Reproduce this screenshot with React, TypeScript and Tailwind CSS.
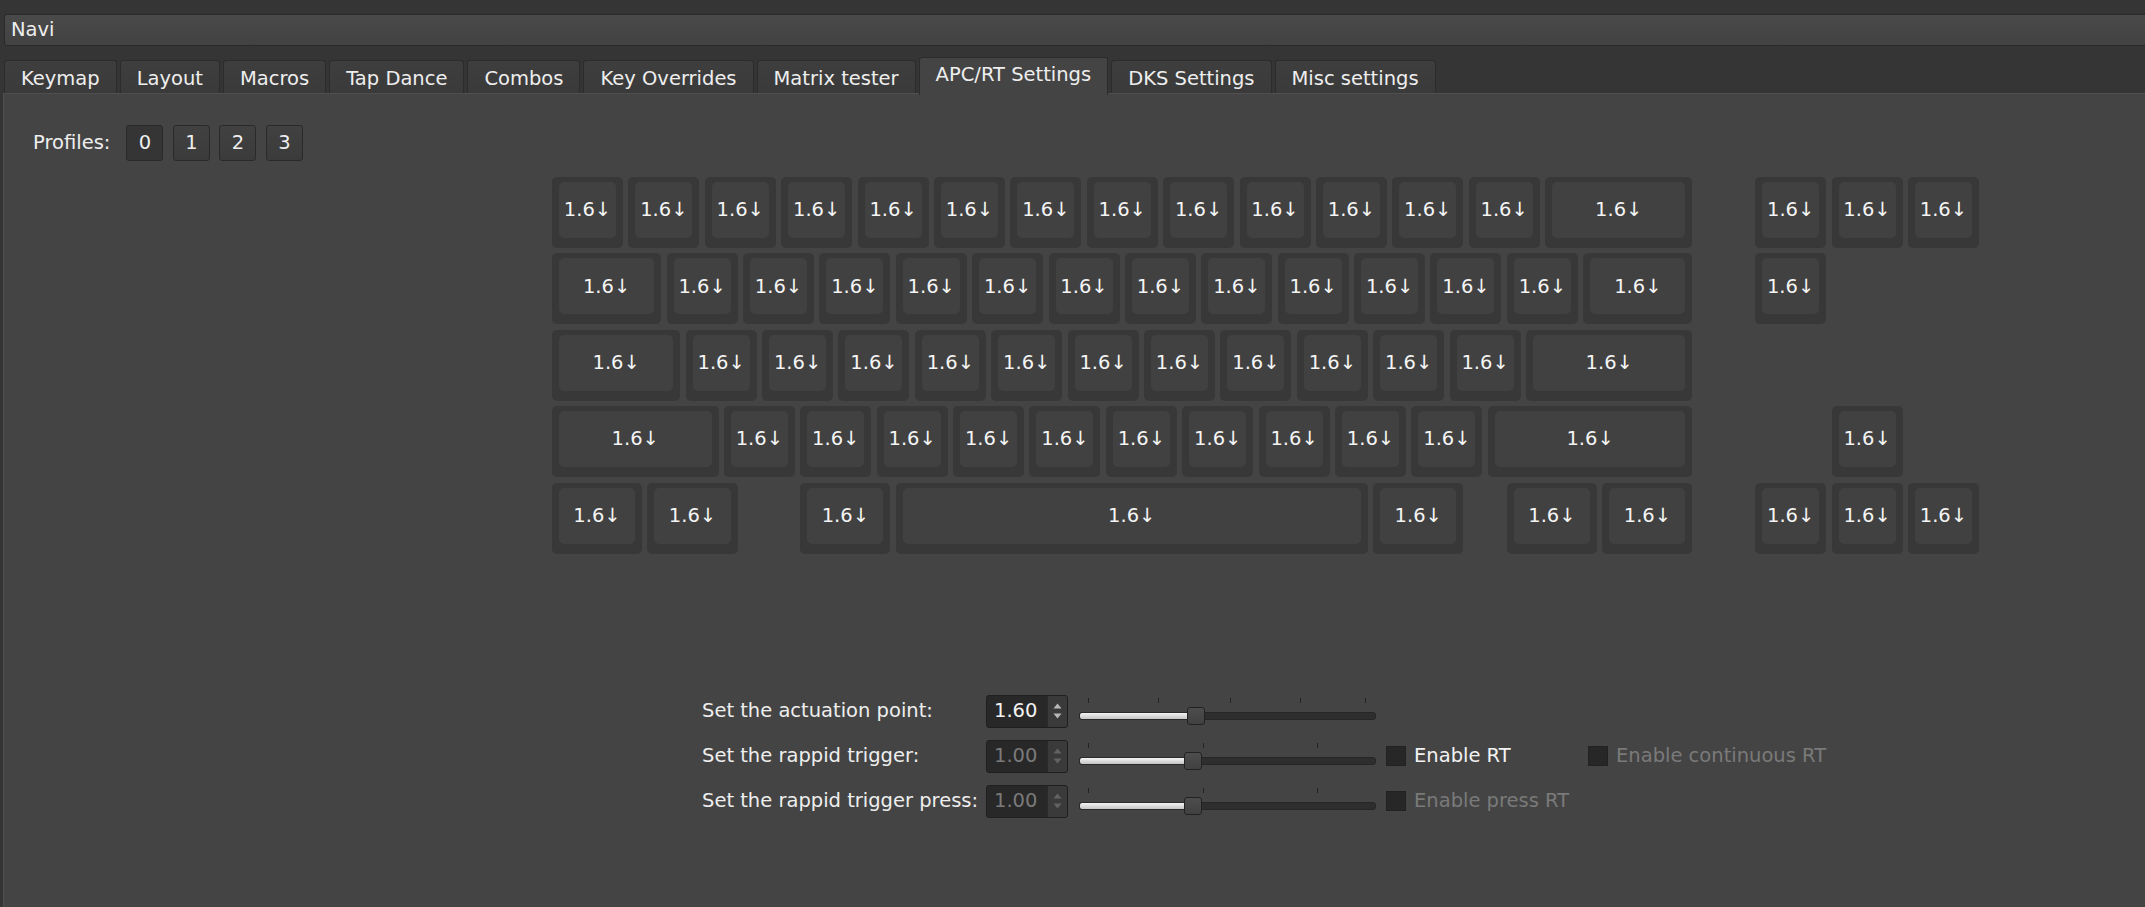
import React from "react";

const U = 76.4;
const G = 5.4;

// negative number = empty space in units, positive = key width in units
const ones = (n: number) => Array(n).fill(1) as number[];

const ROWS: number[][] = [
    [...ones(13), 2, -0.75, 1, 1, 1],
    [1.5, ...ones(12), 1.5, -0.75, 1],
    [1.75, ...ones(11), 2.25],
    [2.25, ...ones(10), 2.75, -1.75, 1],
    [1.25, 1.25, -0.75, 1.25, 6.25, 1.25, -0.5, 1.25, 1.25, -0.75, 1, 1, 1],
];

const TABS = [
    "Keymap",
    "Layout",
    "Macros",
    "Tap Dance",
    "Combos",
    "Key Overrides",
    "Matrix tester",
    "APC/RT Settings",
    "DKS Settings",
    "Misc settings",
];

const Key = ({ w }: { w: number }) => (
    <div
        className="shrink-0 h-[71px] rounded-[5px] bg-[#383838] pt-[5px] px-[7px] pb-[10px]"
        style={{ width: w * U - G, marginRight: G }}
    >
        <div className="h-full rounded-[5px] bg-[#414141] flex items-center justify-center text-[19.5px] text-[#f4f4f4]">
            1.6↓
        </div>
    </div>
);

const SpinBox = ({ value, disabled }: { value: string; disabled?: boolean }) => (
    <div className="w-[82px] h-[33px] shrink-0 rounded-[3px] border border-[#1f1f1f] bg-[#282828] flex">
        <div className={`flex-1 flex items-center pl-[7px] ${disabled ? "text-[#7a7a7a]" : "text-[#f2f2f2]"}`}>
            {value}
        </div>
        <div className="w-[20px] bg-[#3a3a3a] border-l border-[#2a2a2a] rounded-r-[2px] flex flex-col items-center justify-center gap-[4px]">
            <svg width="9" height="6" viewBox="0 0 9 6">
                <path d="M0.5 5.5 L4.5 0.5 L8.5 5.5 Z" fill={disabled ? "#626262" : "#b8b8b8"} />
            </svg>
            <svg width="9" height="6" viewBox="0 0 9 6">
                <path d="M0.5 0.5 L4.5 5.5 L8.5 0.5 Z" fill={disabled ? "#626262" : "#b8b8b8"} />
            </svg>
        </div>
    </div>
);

const Slider = ({ ticks, handle }: { ticks: number[]; handle: number }) => (
    <div className="relative w-[297px] h-[33px] shrink-0 ml-[11px]">
        {ticks.map((t) => (
            <div key={t} className="absolute top-[3px] w-[1px] h-[5px] bg-[#232323]" style={{ left: t }} />
        ))}
        <div className="absolute left-0 right-0 top-[17px] h-[8px] rounded-[3px] border border-[#262626] bg-[#2e2e2e]" />
        <div
            className="absolute left-0 top-[17px] h-[8px] rounded-l-[3px] border border-[#2a2a2a] bg-gradient-to-b from-[#f4f4f4] to-[#c4c4c4]"
            style={{ width: handle }}
        />
        <div
            className="absolute top-[12px] w-[18px] h-[18px] rounded-[3px] border border-[#222] bg-gradient-to-b from-[#4d4d4d] to-[#414141]"
            style={{ left: handle - 9 }}
        />
    </div>
);

const Check = ({ label, disabled, width }: { label: string; disabled?: boolean; width?: number }) => (
    <div className="flex items-center shrink-0" style={width ? { width } : undefined}>
        <div className="w-[20px] h-[20px] bg-[#272727] border border-[#222]" />
        <span className={`ml-[8px] ${disabled ? "text-[#7a7a7a]" : "text-[#f2f2f2]"}`}>{label}</span>
    </div>
);

export default function App() {
    return (
        <div className="w-[2145px] h-[907px] overflow-hidden bg-[#353535] text-[#eeeeee] text-[19.5px] leading-none font-['DejaVu_Sans',sans-serif]">
            <div className="pt-[14px] pl-[4px]">
                <div className="h-[32px] w-[2170px] rounded-[3px] border border-[#2a2a2a] bg-gradient-to-b from-[#4a4a4a] to-[#424242] flex items-center pl-[6px]">
                    Navi
                </div>
            </div>

            <div className="mt-[11px] h-[36px] flex items-end gap-[3px] pl-[4px]">
                {TABS.map((t) => {
                    const active = t === "APC/RT Settings";
                    return (
                        <div
                            key={t}
                            className={
                                active
                                    ? "relative z-10 h-[38px] -mb-[2px] px-[16px] pb-[3px] rounded-t-[3px] border border-b-0 border-[#2c2c2c] bg-[#444444] flex items-center"
                                    : "h-[33px] px-[16px] pt-[3px] rounded-t-[3px] border border-b-0 border-[#2c2c2c] bg-gradient-to-b from-[#3e3e3e] to-[#3a3a3a] flex items-center"
                            }
                        >
                            {t}
                        </div>
                    );
                })}
            </div>

            <div className="ml-[3px] w-[2160px] h-[820px] border-l border-t border-[#4f4f4f] bg-[#444444]">
                <div className="pt-[31px] pl-[29px] flex items-center">
                    <span>Profiles:</span>
                    <div className="ml-[16px] flex gap-[9.5px]">
                        {["0", "1", "2", "3"].map((p) => (
                            <div
                                key={p}
                                className={`w-[37px] h-[36px] rounded-[3px] border border-[#2a2a2a] flex items-center justify-center ${
                                    p === "0" ? "bg-[#353535]" : "bg-gradient-to-b from-[#414141] to-[#3b3b3b]"
                                }`}
                            >
                                {p}
                            </div>
                        ))}
                    </div>
                </div>

                <div className="mt-[16px] ml-[548px] flex flex-col gap-[5.4px]">
                    {ROWS.map((row, i) => (
                        <div key={i} className="flex h-[71px]">
                            {row.map((w, j) =>
                                w < 0 ? (
                                    <div key={j} className="shrink-0" style={{ width: -w * U }} />
                                ) : (
                                    <Key key={j} w={w} />
                                )
                            )}
                        </div>
                    ))}
                </div>

                <div className="mt-[141px] ml-[698px] flex flex-col gap-[12px]">
                    <div className="flex items-center h-[33px]">
                        <span className="w-[284px] shrink-0">Set the actuation point:</span>
                        <SpinBox value="1.60" />
                        <Slider ticks={[9, 79, 151, 221, 286]} handle={117} />
                    </div>
                    <div className="flex items-center h-[33px]">
                        <span className="w-[284px] shrink-0">Set the rappid trigger:</span>
                        <SpinBox value="1.00" disabled />
                        <Slider ticks={[9, 124, 238]} handle={114} />
                        <div className="ml-[10px] flex items-center">
                            <Check label="Enable RT" width={202} />
                            <Check label="Enable continuous RT" disabled />
                        </div>
                    </div>
                    <div className="flex items-center h-[33px]">
                        <span className="w-[284px] shrink-0">Set the rappid trigger press:</span>
                        <SpinBox value="1.00" disabled />
                        <Slider ticks={[9, 124, 238]} handle={114} />
                        <div className="ml-[10px] flex items-center">
                            <Check label="Enable press RT" disabled />
                        </div>
                    </div>
                </div>
            </div>
        </div>
    );
}
